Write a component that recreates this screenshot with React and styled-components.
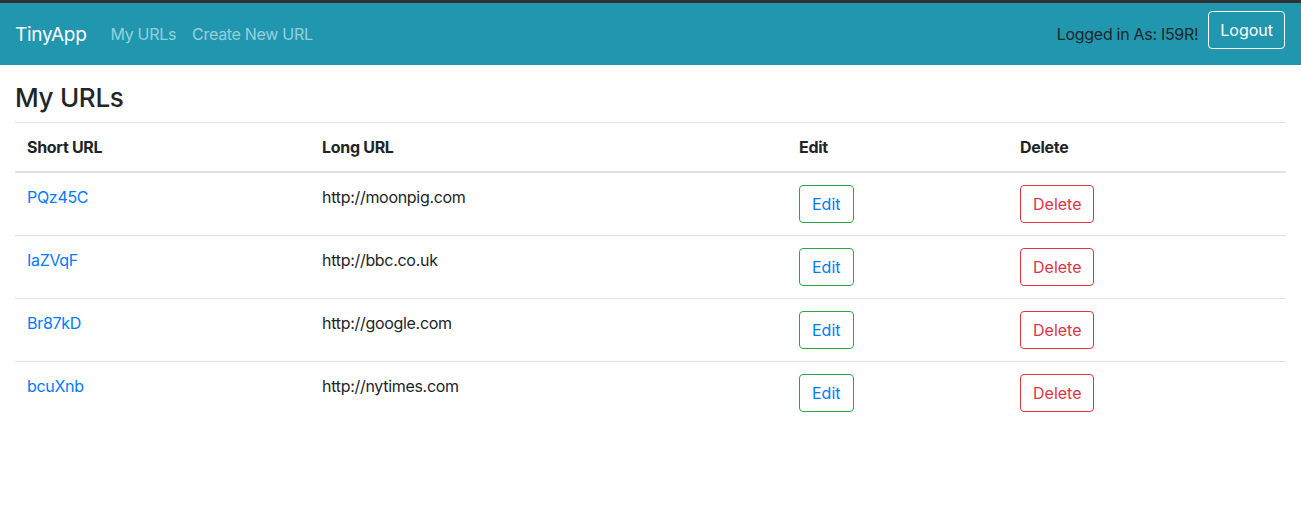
import React from "react"
import styled, { createGlobalStyle } from "styled-components"

const GlobalStyle = createGlobalStyle`
    body {
        margin: 0;
        font-family: Inter, "Liberation Sans", sans-serif;
        font-size: 16px;
        letter-spacing: -0.3px;
        color: #212529;
        background: #fff;
    }
`

const NavBar = styled.nav`
    box-sizing: border-box;
    height: 65px;
    border-top: 3px solid #2f3133;
    background: #2097af;
    display: flex;
    align-items: center;
    padding: 0 16px 0 15px;
`

const Brand = styled.a`
    font-size: 19px;
    color: #fff;
    margin-right: 16px;
    text-decoration: none;
`

const NavLink = styled.a`
    color: rgba(255, 255, 255, 0.55);
    padding: 0 8px;
    text-decoration: none;
`

const Spacer = styled.div`
    flex: 1;
`

const UserText = styled.span`
    color: #212529;
    margin-right: 10px;
`

const LogoutButton = styled.button`
    font: inherit;
    color: #fff;
    background: transparent;
    border: 1px solid #fff;
    border-radius: 4px;
    height: 38px;
    padding: 0 11px;
    align-self: flex-start;
    margin-top: 8px;
`

const Main = styled.main`
    padding: 17px 15px 0;
`

const Title = styled.h3`
    font-size: 26px;
    font-weight: 500;
    line-height: 32px;
    margin: 0 0 8px;
`

const Table = styled.table`
    width: 100%;
    table-layout: fixed;
    border-collapse: collapse;
`

const Th = styled.th`
    width: ${p => p.$w}px;
    text-align: left;
    font-weight: 700;
    padding: 12px;
    border-top: 1px solid #dee2e6;
    border-bottom: 2px solid #dee2e6;
    line-height: 24px;
`

const Td = styled.td`
    padding: 12px;
    vertical-align: top;
    border-top: 1px solid #dee2e6;
    line-height: 24px;
`

const ShortLink = styled.a`
    color: #007bff;
    text-decoration: none;
`

const OutlineButton = styled.button`
    font: inherit;
    background: transparent;
    height: 38px;
    padding: 0 12px;
    border-radius: 4px;
    border: 1px solid ${p => p.$border};
    color: ${p => p.$color};
    vertical-align: top;
`

const urls = [
    { short: "PQz45C", long: "http://moonpig.com" },
    { short: "IaZVqF", long: "http://bbc.co.uk" },
    { short: "Br87kD", long: "http://google.com" },
    { short: "bcuXnb", long: "http://nytimes.com" },
]

const App = () => (
    <>
        <GlobalStyle />
        <NavBar>
            <Brand href="#">TinyApp</Brand>
            <NavLink href="#">My URLs</NavLink>
            <NavLink href="#">Create New URL</NavLink>
            <Spacer />
            <UserText>Logged in As: I59R!</UserText>
            <LogoutButton>Logout</LogoutButton>
        </NavBar>
        <Main>
            <Title>My URLs</Title>
            <Table>
                <thead>
                    <tr>
                        <Th $w={271}>Short URL</Th>
                        <Th $w={453}>Long URL</Th>
                        <Th $w={197}>Edit</Th>
                        <Th>Delete</Th>
                    </tr>
                </thead>
                <tbody>
                    {urls.map(u => (
                        <tr key={u.short}>
                            <Td>
                                <ShortLink href="#">{u.short}</ShortLink>
                            </Td>
                            <Td>{u.long}</Td>
                            <Td>
                                <OutlineButton $border="#28a745" $color="#007bff">Edit</OutlineButton>
                            </Td>
                            <Td>
                                <OutlineButton $border="#dc3545" $color="#dc3545">Delete</OutlineButton>
                            </Td>
                        </tr>
                    ))}
                </tbody>
            </Table>
        </Main>
    </>
)

export default App
